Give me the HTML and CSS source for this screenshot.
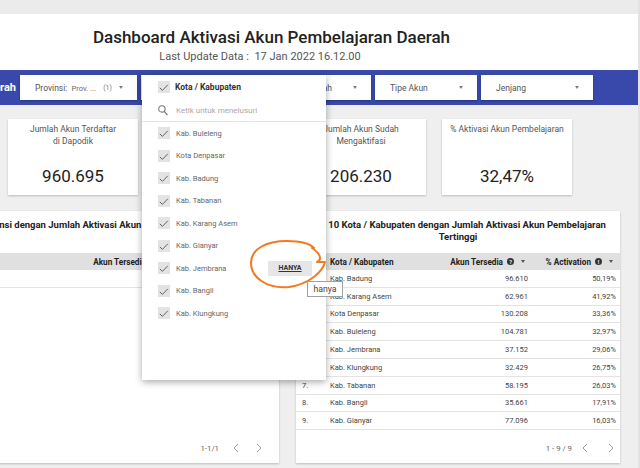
FILE: index.html
```html
<!DOCTYPE html>
<html lang="id">
<head>
<meta charset="utf-8">
<title>Dashboard Aktivasi Akun Pembelajaran Daerah</title>
<link rel="stylesheet" href="styles.css">
</head>
<body>
<div class="page">
  <div class="topstrip"></div>
  <header class="header">
    <h1 class="title">Dashboard Aktivasi Akun Pembelajaran Daerah</h1>
    <div class="updated">Last Update Data :&nbsp; 17 Jan 2022 16.12.00</div>
  </header>

  <nav class="filterbar">
    <span class="bar-label">Daerah</span>
    <div class="filter f-prov"><span class="name">Provinsi: <small class="sel">Prov. ...</small></span><span class="count">(1)</span><span class="caret"></span></div>
    <div class="filter f-kota"><span class="name">Kota / Kabupaten</span><span class="caret"></span></div>
    <div class="filter f-sek"><span class="name">Nama Sekolah</span><span class="caret"></span></div>
    <div class="filter f-tipe"><span class="name">Tipe Akun</span><span class="caret"></span></div>
    <div class="filter f-jen"><span class="name">Jenjang</span><span class="caret"></span></div>
  </nav>

  <section class="cards">
    <div class="card">
      <div class="card-title">Jumlah Akun Terdaftar<br>di Dapodik</div>
      <div class="card-value">960.695</div>
    </div>
    <div class="card">
      <div class="card-title">Jumlah Akun Belum<br>Mengaktifasi</div>
      <div class="card-value">754.465</div>
    </div>
    <div class="card">
      <div class="card-title">Jumlah Akun Sudah<br>Mengaktifasi</div>
      <div class="card-value">206.230</div>
    </div>
    <div class="card card-last">
      <div class="card-title">% Aktivasi Akun Pembelajaran</div>
      <div class="card-value">32,47%</div>
    </div>
  </section>

  <section class="panels">
    <div class="panel panel-left">
      <div class="panel-title title-left">Top 10 Provinsi dengan Jumlah Aktivasi Akun Pembelajaran Tertinggi</div>
      <div class="thead grid-left">
        <span></span>
        <span class="h-name">Provinsi</span>
        <span class="h-val">Akun Tersedia<i class="qi">?</i><span class="caret dark"></span></span>
        <span class="h-val">% Activation<i class="qi">!</i><span class="caret dark"></span></span>
      </div>
      <div class="trow grid-left">
        <span class="c-num">1.</span><span class="c-name">Prov. Bali</span><span class="c-val">627.984</span><span class="c-val">32,47%</span>
      </div>
      <div class="pager pager-left">
        <span>1-1/1</span>
        <svg class="chev first" width="6" height="10" viewBox="0 0 6 10"><path d="M5 1 L1 5 L5 9" fill="none" stroke="#9a9a9a" stroke-width="1"/></svg>
        <svg class="chev" width="6" height="10" viewBox="0 0 6 10"><path d="M1 1 L5 5 L1 9" fill="none" stroke="#9a9a9a" stroke-width="1"/></svg>
      </div>
    </div>

    <div class="panel panel-right">
      <div class="panel-title">Top 10 Kota / Kabupaten dengan Jumlah Aktivasi Akun Pembelajaran<br>Tertinggi</div>
      <div class="thead grid-right">
        <span></span>
        <span class="h-name">Kota / Kabupaten</span>
        <span class="h-val">Akun Tersedia<i class="qi">?</i><span class="caret dark"></span></span>
        <span class="h-val">% Activation<i class="qi">!</i><span class="caret dark"></span></span>
      </div>
      <div class="trow grid-right"><span class="c-num">1.</span><span class="c-name">Kab. Badung</span><span class="c-val">96.610</span><span class="c-val">50,19%</span></div>
      <div class="trow grid-right"><span class="c-num">2.</span><span class="c-name">Kab. Karang Asem</span><span class="c-val">62.961</span><span class="c-val">41,92%</span></div>
      <div class="trow grid-right"><span class="c-num">3.</span><span class="c-name">Kota Denpasar</span><span class="c-val">130.208</span><span class="c-val">33,36%</span></div>
      <div class="trow grid-right"><span class="c-num">4.</span><span class="c-name">Kab. Buleleng</span><span class="c-val">104.781</span><span class="c-val">32,97%</span></div>
      <div class="trow grid-right"><span class="c-num">5.</span><span class="c-name">Kab. Jembrana</span><span class="c-val">37.152</span><span class="c-val">29,06%</span></div>
      <div class="trow grid-right"><span class="c-num">6.</span><span class="c-name">Kab. Klungkung</span><span class="c-val">32.429</span><span class="c-val">26,75%</span></div>
      <div class="trow grid-right"><span class="c-num">7.</span><span class="c-name">Kab. Tabanan</span><span class="c-val">58.195</span><span class="c-val">26,03%</span></div>
      <div class="trow grid-right"><span class="c-num">8.</span><span class="c-name">Kab. Bangli</span><span class="c-val">35.661</span><span class="c-val">17,91%</span></div>
      <div class="trow grid-right"><span class="c-num">9.</span><span class="c-name">Kab. Gianyar</span><span class="c-val">77.096</span><span class="c-val">16,03%</span></div>
      <div class="pager pager-right">
        <span>1 - 9 / 9</span>
        <svg class="chev first" width="6" height="10" viewBox="0 0 6 10"><path d="M5 1 L1 5 L5 9" fill="none" stroke="#9a9a9a" stroke-width="1"/></svg>
        <svg class="chev" width="6" height="10" viewBox="0 0 6 10"><path d="M1 1 L5 5 L1 9" fill="none" stroke="#9a9a9a" stroke-width="1"/></svg>
      </div>
    </div>
  </section>
</div>

<div class="dropdown">
  <div class="dd-head">
    <svg class="cb" width="12" height="12" viewBox="0 0 12 12"><rect width="12" height="12" fill="#e3e3e3"/><path d="M1.8 6.8 L4.4 9.4 L9.8 3.8" fill="none" stroke="#555" stroke-width="0.9"/></svg>
    <span>Kota / Kabupaten</span>
  </div>
  <div class="dd-search">
    <svg width="10" height="11" viewBox="0 0 10 11"><circle cx="3.9" cy="3.9" r="3.2" fill="none" stroke="#777" stroke-width="1.1"/><path d="M6.3 6.4 L9.4 10" stroke="#777" stroke-width="1.2"/></svg>
    <span>Ketik untuk menelusuri</span>
  </div>
  <div class="dd-list">
    <div class="dd-item"><svg class="cb" width="12" height="12" viewBox="0 0 12 12"><rect width="12" height="12" fill="#e3e3e3"/><path d="M1.8 6.8 L4.4 9.4 L9.8 3.8" fill="none" stroke="#555" stroke-width="0.9"/></svg><span>Kab. Buleleng</span></div>
    <div class="dd-item"><svg class="cb" width="12" height="12" viewBox="0 0 12 12"><rect width="12" height="12" fill="#e3e3e3"/><path d="M1.8 6.8 L4.4 9.4 L9.8 3.8" fill="none" stroke="#555" stroke-width="0.9"/></svg><span>Kota Denpasar</span></div>
    <div class="dd-item"><svg class="cb" width="12" height="12" viewBox="0 0 12 12"><rect width="12" height="12" fill="#e3e3e3"/><path d="M1.8 6.8 L4.4 9.4 L9.8 3.8" fill="none" stroke="#555" stroke-width="0.9"/></svg><span>Kab. Badung</span></div>
    <div class="dd-item"><svg class="cb" width="12" height="12" viewBox="0 0 12 12"><rect width="12" height="12" fill="#e3e3e3"/><path d="M1.8 6.8 L4.4 9.4 L9.8 3.8" fill="none" stroke="#555" stroke-width="0.9"/></svg><span>Kab. Tabanan</span></div>
    <div class="dd-item"><svg class="cb" width="12" height="12" viewBox="0 0 12 12"><rect width="12" height="12" fill="#e3e3e3"/><path d="M1.8 6.8 L4.4 9.4 L9.8 3.8" fill="none" stroke="#555" stroke-width="0.9"/></svg><span>Kab. Karang Asem</span></div>
    <div class="dd-item"><svg class="cb" width="12" height="12" viewBox="0 0 12 12"><rect width="12" height="12" fill="#e3e3e3"/><path d="M1.8 6.8 L4.4 9.4 L9.8 3.8" fill="none" stroke="#555" stroke-width="0.9"/></svg><span>Kab. Gianyar</span></div>
    <div class="dd-item"><svg class="cb" width="12" height="12" viewBox="0 0 12 12"><rect width="12" height="12" fill="#e3e3e3"/><path d="M1.8 6.8 L4.4 9.4 L9.8 3.8" fill="none" stroke="#555" stroke-width="0.9"/></svg><span>Kab. Jembrana</span><span class="only">HANYA</span></div>
    <div class="dd-item"><svg class="cb" width="12" height="12" viewBox="0 0 12 12"><rect width="12" height="12" fill="#e3e3e3"/><path d="M1.8 6.8 L4.4 9.4 L9.8 3.8" fill="none" stroke="#555" stroke-width="0.9"/></svg><span>Kab. Bangli</span></div>
    <div class="dd-item"><svg class="cb" width="12" height="12" viewBox="0 0 12 12"><rect width="12" height="12" fill="#e3e3e3"/><path d="M1.8 6.8 L4.4 9.4 L9.8 3.8" fill="none" stroke="#555" stroke-width="0.9"/></svg><span>Kab. Klungkung</span></div>
  </div>
</div>

<svg class="scribble" width="100" height="70" viewBox="0 0 100 70">
  <path d="M72,18 C81,24 82,30 77,32 L85,32 C83,41 70,54 49,57 C26,59 11,47 11,33 C11,19 26,11 47,11 C60,11 69,13 74,18" fill="none" stroke="#f47a20" stroke-width="2" stroke-linecap="round" stroke-linejoin="round"/>
</svg>

<div class="tooltip">hanya</div>
</body>
</html>
```

FILE: styles.css
```css
* { box-sizing: border-box; margin: 0; padding: 0; }

html, body { width: 640px; height: 468px; overflow: hidden; }

body {
  position: relative;
  background: #e3e3e3;
  font-family: Roboto, "Liberation Sans", sans-serif;
  color: #333;
}

.page {
  width: 638px;
  height: 468px;
  background: #efefef;
  overflow: hidden;
}

.topstrip { height: 14px; background: #ebebeb; }

.header { height: 56px; background: #fff; }

.title {
  width: 543px;
  padding-top: 13px;
  font-size: 17px;
  font-weight: 500;
  line-height: 20px;
  text-align: center;
  color: #222;
}

.updated {
  width: 520px;
  margin-top: 3px;
  font-size: 11px;
  line-height: 14px;
  text-align: center;
  color: #555;
}

/* filter bar */
.filterbar {
  display: flex;
  gap: 4px;
  height: 35px;
  padding-top: 5px;
  background: #3949ab;
}

.bar-label {
  flex: none;
  width: 36px;
  height: 25px;
  margin-left: -20px;
  line-height: 25px;
  text-align: right;
  white-space: nowrap;
  color: #fff;
  font-size: 11px;
  font-weight: 700;
}

.filter {
  flex: none;
  height: 25px;
  display: flex;
  align-items: center;
  padding: 0 14px 0 15px;
  background: #fff;
  box-shadow: 0 1px 2px rgba(0, 0, 0, 0.3);
  font-size: 8.5px;
  color: #555;
  white-space: nowrap;
}

.filter .name { flex: 1; }
.filter .sel { font-size: 7.5px; color: #666; margin-left: 2px; }
.filter .count { font-size: 7px; color: #777; margin-right: 7px; }

.f-prov { width: 117px; }
.f-kota { width: 117px; }
.f-sek { width: 109px; }
.f-tipe { width: 102px; }
.f-jen { width: 112px; }

.caret {
  flex: none;
  width: 0;
  height: 0;
  border-left: 2px solid transparent;
  border-right: 2px solid transparent;
  border-top: 3px solid #808080;
}
.caret.dark { border-top-color: #555; margin-left: 7px; }

/* score cards */
.cards {
  display: flex;
  gap: 14px;
  padding: 14px 0 0 8px;
}

.card {
  width: 130px;
  height: 76px;
  padding-top: 4px;
  background: #fff;
  box-shadow: 0 1px 2px rgba(0, 0, 0, 0.22);
  text-align: center;
}
.card-last { margin-left: 2px; }

.card-title {
  height: 27px;
  font-size: 8.5px;
  line-height: 12px;
  color: #555;
}

.card-value {
  margin-top: 16px;
  font-size: 17px;
  line-height: 20px;
  color: #222;
}

/* tables */
.panels {
  display: flex;
  gap: 17px;
  margin-top: 16px;
}

.panel {
  flex: none;
  height: 252px;
  display: flex;
  flex-direction: column;
  background: #fff;
  box-shadow: 0 1px 2px rgba(0, 0, 0, 0.22);
}

.panel-left { width: 362px; margin-left: -83px; }
.panel-right { width: 324px; }

.panel-title {
  height: 42px;
  padding-top: 8px;
  font-size: 9.5px;
  font-weight: 700;
  line-height: 12px;
  text-align: center;
  white-space: nowrap;
  color: #222;
}
.title-left { padding-right: 7px; }

.thead, .trow {
  display: grid;
  align-items: center;
}
.grid-right { grid-template-columns: 30px 1fr 92px 88px; }
.grid-left { grid-template-columns: 30px 136px 92px 1fr; }

.thead {
  height: 17px;
  background: #e0e0e0;
  font-size: 8.2px;
  font-weight: 700;
  color: #222;
  white-space: nowrap;
}

.h-name { padding-left: 4px; }
.h-val {
  display: flex;
  align-items: center;
  justify-content: flex-end;
  padding-right: 7px;
}

.qi {
  display: inline-flex;
  align-items: center;
  justify-content: center;
  width: 7px;
  height: 7px;
  margin-left: 4px;
  border-radius: 50%;
  background: #333;
  color: #fff;
  font-size: 5.5px;
  font-style: normal;
  font-weight: 700;
}

.trow {
  height: 17.8px;
  border-bottom: 1px solid #e3e3e3;
  font-size: 7.5px;
  color: #444;
  white-space: nowrap;
}

.c-num { padding-left: 6px; }
.c-name { padding-left: 4px; }
.c-val { text-align: right; padding-right: 4px; }

.pager {
  margin-top: auto;
  height: 30px;
  display: flex;
  align-items: center;
  justify-content: flex-end;
  font-size: 7.8px;
  color: #666;
}
.pager-right { padding-right: 6px; }
.pager-right .chev { margin-left: 20px; }
.pager-right .chev.first { margin-left: 10px; }
.pager-left { padding-right: 17px; }
.pager-left .chev { margin-left: 17px; }
.pager-left .chev.first { margin-left: 14px; }

/* dropdown menu (overlay) */
.dropdown {
  position: absolute;
  left: 142px;
  top: 75px;
  width: 184px;
  height: 305px;
  background: #fff;
  box-shadow: 0 2px 7px rgba(0, 0, 0, 0.35);
  z-index: 5;
}

.cb { flex: none; display: block; }

.dd-head {
  height: 24px;
  display: flex;
  align-items: center;
  gap: 5px;
  padding-left: 16px;
  font-size: 8.5px;
  font-weight: 700;
  color: #333;
}

.dd-search {
  height: 23px;
  display: flex;
  align-items: center;
  gap: 8px;
  padding-left: 16px;
  border-bottom: 1px solid #e4e4e4;
  font-size: 8px;
  color: #a8a8a8;
}

.dd-item {
  height: 22.5px;
  display: flex;
  align-items: center;
  gap: 6px;
  padding-left: 16px;
  font-size: 7.5px;
  color: #666;
}

.only {
  margin-left: auto;
  margin-right: 14px;
  width: 44px;
  height: 15px;
  display: flex;
  align-items: center;
  justify-content: center;
  background: #e6e6e6;
  font-size: 7px;
  font-weight: 700;
  text-decoration: underline;
  color: #333;
}

/* annotation drawn over the screenshot */
.scribble {
  position: absolute;
  left: 240px;
  top: 230px;
  z-index: 6;
}

.tooltip {
  position: absolute;
  left: 307px;
  top: 281px;
  width: 36px;
  height: 16px;
  display: flex;
  align-items: center;
  justify-content: center;
  background: #fff;
  border: 1px solid #a0a0a0;
  font-size: 8.7px;
  color: #444;
  z-index: 7;
}
```
